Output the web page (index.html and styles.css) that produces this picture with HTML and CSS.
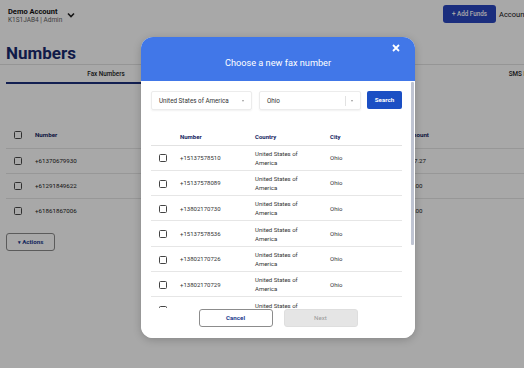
FILE: index.html
```html
<!DOCTYPE html>
<html>
  <head>
    <meta charset="utf-8" />
    <link rel="stylesheet" href="styles.css">
  </head>
  <body>
    <div class="page">
      <div class="topbar">
        <div class="account">
          <div>
            <div class="account-name">Demo Account</div>
            <div class="account-meta">K1S1JAB4 | Admin</div>
          </div>
          <svg class="chevron" width="8" height="6" viewBox="0 0 8 6">
            <path d="M1 1.5 L4 4.5 L7 1.5" fill="none" stroke="#222" stroke-width="1.6" />
          </svg>
        </div>
        <div class="topbar-right">
          <button class="btn-funds">+ Add Funds</button>
          <span class="account-link">Account</span>
        </div>
      </div>

      <h1 class="page-title">Numbers</h1>

      <div class="tabs">
        <div class="tab active">Fax Numbers</div>
        <div class="tab tab-mid">Voice Numbers</div>
        <div class="tab">SMS Numbers</div>
      </div>

      <table class="page-table">
        <colgroup>
          <col style="width: 29px" />
          <col style="width: 372px" />
          <col />
        </colgroup>
        <thead>
          <tr>
            <th><span class="check"></span></th>
            <th>Number</th>
            <th>Amount</th>
          </tr>
        </thead>
        <tbody>
          <tr><td><span class="check"></span></td><td>+61370679930</td><td>$27.27</td></tr>
          <tr><td><span class="check"></span></td><td>+61291849622</td><td>$0.00</td></tr>
          <tr><td><span class="check"></span></td><td>+61861867006</td><td>$0.00</td></tr>
        </tbody>
      </table>

      <button class="btn-actions"><span class="caret">&#9662;</span> Actions</button>
    </div>

    <div class="overlay"></div>

    <div class="modal">
      <div class="modal-header">
        <div class="modal-title">Choose a new fax number</div>
        <svg class="modal-close" width="8" height="8" viewBox="0 0 8 8">
          <path d="M1 1 L7 7 M7 1 L1 7" stroke="#fff" stroke-width="1.8" />
        </svg>
      </div>

      <div class="modal-body">
        <div class="search-row">
          <div class="select select-country">
            <span>United States of America</span>
            <span class="select-caret"></span>
          </div>
          <div class="select select-city">
            <span>Ohio</span>
            <span class="select-sep"></span>
            <span class="select-caret"></span>
          </div>
          <button class="btn-search">Search</button>
        </div>

        <table class="fax-table">
          <colgroup>
            <col style="width: 29px" />
            <col style="width: 75px" />
            <col style="width: 75px" />
            <col />
          </colgroup>
          <thead>
            <tr><th></th><th>Number</th><th>Country</th><th>City</th></tr>
          </thead>
          <tbody>
            <tr><td><span class="check"></span></td><td>+15137578510</td><td>United States of<br>America</td><td>Ohio</td></tr>
            <tr><td><span class="check"></span></td><td>+15137578089</td><td>United States of<br>America</td><td>Ohio</td></tr>
            <tr><td><span class="check"></span></td><td>+13802170730</td><td>United States of<br>America</td><td>Ohio</td></tr>
            <tr><td><span class="check"></span></td><td>+15137578536</td><td>United States of<br>America</td><td>Ohio</td></tr>
            <tr><td><span class="check"></span></td><td>+13802170726</td><td>United States of<br>America</td><td>Ohio</td></tr>
            <tr><td><span class="check"></span></td><td>+13802170729</td><td>United States of<br>America</td><td>Ohio</td></tr>
            <tr><td><span class="check"></span></td><td>+13802170737</td><td>United States of<br>America</td><td>Ohio</td></tr>
            <tr><td><span class="check"></span></td><td>+15137578112</td><td>United States of<br>America</td><td>Ohio</td></tr>
          </tbody>
        </table>
        <div class="scroll-thumb"></div>
      </div>

      <div class="modal-footer">
        <button class="btn-cancel">Cancel</button>
        <button class="btn-next" disabled>Next</button>
      </div>
    </div>
  </body>
</html>
```

FILE: styles.css
```css
* {
  box-sizing: border-box;
}
body {
  margin: 0;
  width: 524px;
  height: 368px;
  overflow: hidden;
  position: relative;
  background: #ffffff;
  color: #222222;
  font-family: Roboto, "Liberation Sans", sans-serif;
}
button {
  font-family: Roboto, "Liberation Sans", sans-serif;
  cursor: pointer;
}
.page {
  width: 534px;
}
.topbar {
  display: flex;
  justify-content: space-between;
  align-items: flex-start;
  padding: 5px 0 0 8px;
}
.account {
  display: flex;
  align-items: center;
  gap: 5px;
  padding-top: 2px;
}
.account-name {
  font-size: 7.5px;
  font-weight: 700;
  line-height: 9px;
  color: #111111;
}
.account-meta {
  font-size: 6.5px;
  line-height: 8px;
  color: #5e5e5e;
}
.chevron {
  margin-top: -2px;
}
.topbar-right {
  display: flex;
  align-items: center;
  gap: 3px;
}
.btn-funds {
  width: 53px;
  height: 18px;
  border: none;
  border-radius: 3px;
  background: #2a46c0;
  color: #ffffff;
  font-size: 6.3px;
  font-weight: 500;
}
.account-link {
  width: 35px;
  font-size: 7.5px;
  color: #111111;
}
.page-title {
  margin: 19px 0 0 6px;
  font-size: 17px;
  line-height: 20px;
  font-weight: 700;
  color: #182a6e;
}
.tabs {
  display: flex;
  margin-top: 1px;
  border-top: 1px solid #e2e2e2;
  padding-left: 6px;
}
.tab {
  width: 200px;
  flex: none;
  height: 19px;
  line-height: 18px;
  text-align: center;
  font-size: 6.3px;
  font-weight: 500;
  color: #222222;
}
.tab-mid {
  width: 223px;
  visibility: hidden;
}
.tab.active {
  border-bottom: 2px solid #1c2f7c;
}
.check {
  display: inline-block;
  width: 8px;
  height: 8px;
  border: 1px solid #4a4a4a;
  border-radius: 1.5px;
  vertical-align: middle;
}
.page-table {
  margin: 38px 0 0 6px;
  width: 528px;
  border-collapse: collapse;
  table-layout: fixed;
  font-size: 6.2px;
}
.page-table th,
.page-table td {
  padding: 0;
  text-align: left;
  height: 25px;
}
.page-table th:first-child,
.page-table td:first-child {
  padding-left: 8px;
}
.page-table th {
  height: 26px;
  font-weight: 700;
  color: #15245f;
  border-bottom: 1px solid #e6e6e6;
}
.page-table tbody tr:not(:last-child) td {
  border-bottom: 1px solid #e6e6e6;
}
.btn-actions {
  display: block;
  margin: 10px 0 0 6px;
  width: 49px;
  height: 18px;
  border: 1px solid #8a8a8a;
  border-radius: 3px;
  background: #ffffff;
  color: #1d3a8e;
  font-size: 6.2px;
  font-weight: 700;
}
.caret {
  font-size: 5px;
}
.overlay {
  position: absolute;
  inset: 0;
  background: rgba(0, 0, 0, 0.34);
}
.modal {
  position: absolute;
  left: 141px;
  top: 37px;
  width: 274px;
  height: 301px;
  display: flex;
  flex-direction: column;
  background: #ffffff;
  border-radius: 12px;
  overflow: hidden;
  box-shadow: 0 2px 8px rgba(0, 0, 0, 0.2);
}
.modal-header {
  position: relative;
  flex: none;
  height: 44px;
  padding-top: 20px;
  background: #4177e8;
  text-align: center;
}
.modal-title {
  font-size: 9.2px;
  line-height: 12px;
  color: #ffffff;
}
.modal-close {
  position: absolute;
  top: 7px;
  right: 15px;
}
.modal-body {
  position: relative;
  flex: 1;
  min-height: 0;
  overflow: hidden;
  padding: 10px 13px 0 10px;
}
/* fake scrollbar thumb, the real one is hidden in the screenshot browser */
.scroll-thumb {
  position: absolute;
  top: 1px;
  right: 1px;
  width: 3px;
  height: 163px;
  border-radius: 1px;
  background: #bfc4d2;
}
.search-row {
  display: flex;
  align-items: flex-start;
  gap: 7px;
}
.select {
  display: flex;
  align-items: center;
  height: 19px;
  padding: 0 7px;
  border: 1px solid #ececec;
  border-radius: 2px;
  box-shadow: 0 1px 2px rgba(0, 0, 0, 0.06);
  font-size: 6.3px;
  color: #333333;
}
.select-country {
  width: 101px;
}
.select-country span:first-child {
  flex: 1;
}
.select-city {
  width: 102px;
}
.select-city span:first-child {
  flex: 1;
}
.select-sep {
  width: 1px;
  height: 10px;
  background: #e2e2e2;
  margin-right: 5px;
}
.select-caret {
  width: 0;
  height: 0;
  border-left: 1.5px solid transparent;
  border-right: 1.5px solid transparent;
  border-top: 2px solid #9a9a9a;
}
.btn-search {
  width: 35px;
  height: 18px;
  margin-left: -1px;
  border: none;
  border-radius: 2px;
  background: #1b4fc4;
  color: #ffffff;
  font-size: 6.2px;
  font-weight: 700;
}
.fax-table {
  width: 100%;
  margin-top: 19px;
  border-collapse: collapse;
  table-layout: fixed;
  font-size: 6px;
  color: #333333;
}
.fax-table th,
.fax-table td {
  padding: 0;
  text-align: left;
}
.fax-table th {
  height: 16px;
  font-weight: 700;
  color: #15245f;
  border-bottom: 1px solid #e2e2e2;
}
.fax-table td {
  height: 25.33px;
  line-height: 9px;
  border-bottom: 1px solid #e6e6e6;
}
.fax-table td:first-child {
  padding-left: 8px;
}
.fax-table .check {
  border-color: #444444;
}
.modal-footer {
  flex: none;
  height: 30px;
  display: flex;
  justify-content: center;
  align-items: flex-start;
  gap: 11px;
  padding-top: 1px;
  background: #ffffff;
}
.btn-cancel,
.btn-next {
  width: 74px;
  height: 18px;
  border-radius: 3px;
  font-size: 6.2px;
}
.btn-cancel {
  border: 1px solid #8c8c8c;
  background: #ffffff;
  color: #1d3a8e;
  font-weight: 700;
}
.btn-next {
  border: 1px solid #dedede;
  background: #e5e5e5;
  color: #9a9a9a;
  cursor: default;
}
```
